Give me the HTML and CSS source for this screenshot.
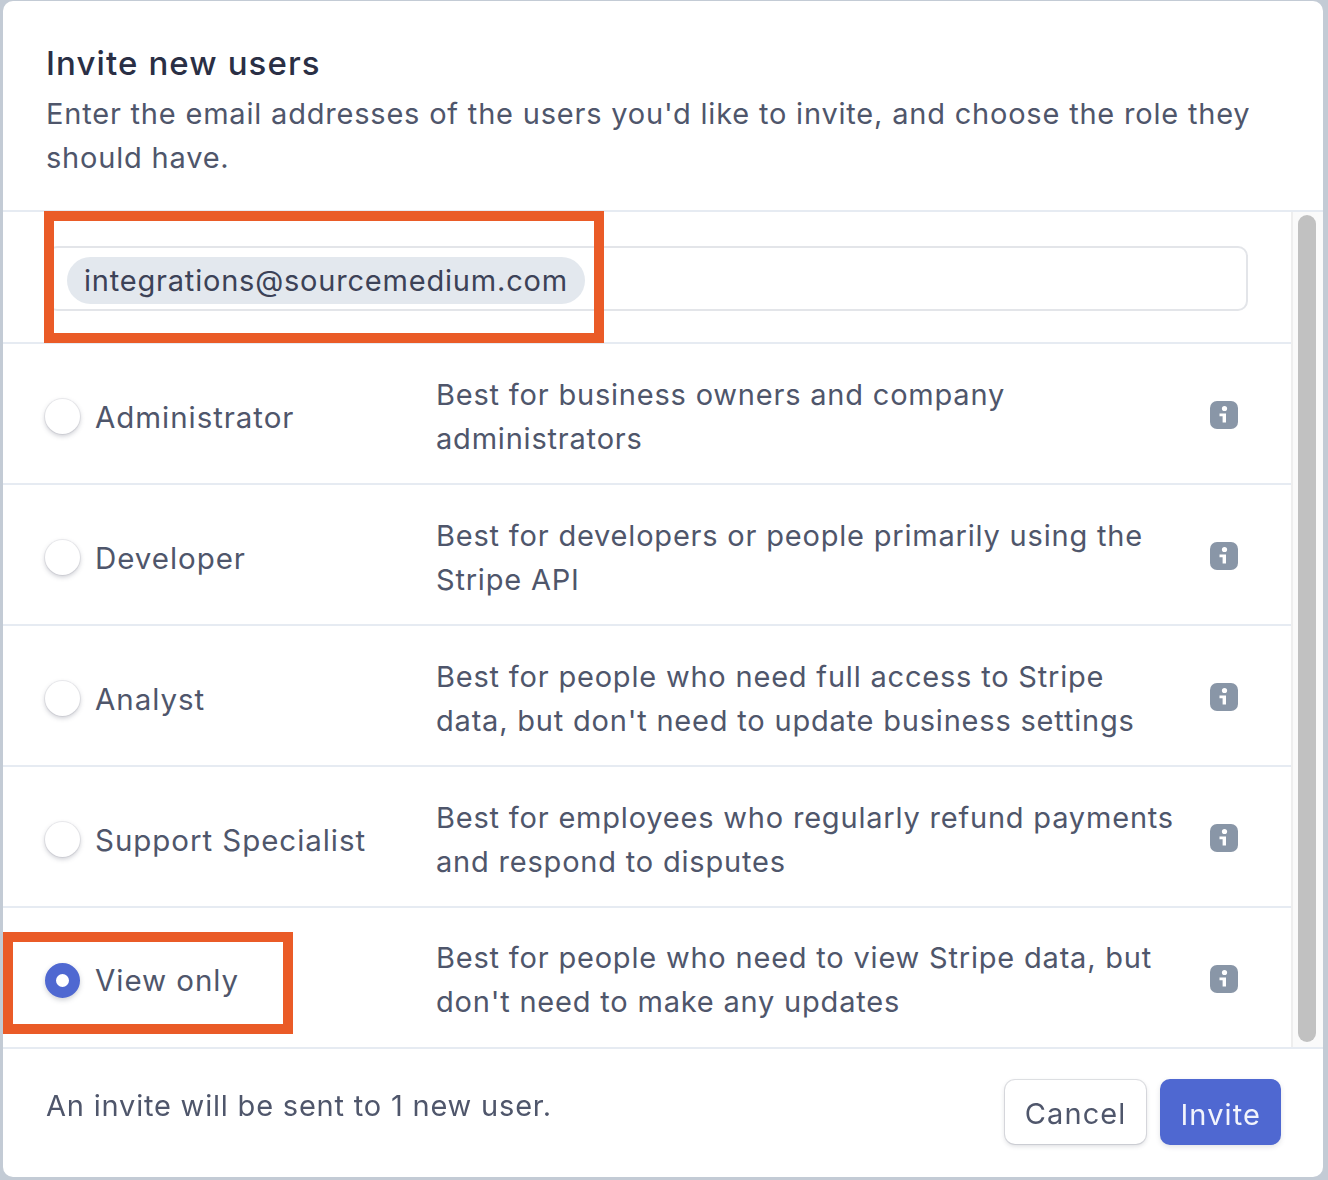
FILE: index.html
```html
<!DOCTYPE html>
<html lang="en">
<head>
<meta charset="utf-8">
<title>Invite new users</title>
<link rel="stylesheet" href="styles.css">
</head>
<body>
<div class="modal">
  <header class="head">
    <h1 class="title">Invite new users</h1>
    <p class="lead">Enter the email addresses of the users you'd like to invite, and choose the role they should have.</p>
  </header>
  <div class="middle">
    <div class="scroll">
      <div class="email-row">
        <div class="email-input"><span class="chip">integrations@sourcemedium.com</span></div>
      </div>
      <div class="role">
        <span class="radio"></span><span class="role-name">Administrator</span>
        <span class="role-desc">Best for business owners and company administrators</span>
        <svg class="info" viewBox="0 0 28 28"><rect width="28" height="28" rx="7" fill="#8996a7"/><circle cx="14.5" cy="7.5" r="2.6" fill="#fff"/><path d="M9.5 12.5h6.5v9h-3.4v-6.2H9.5z" fill="#fff"/></svg>
      </div>
      <div class="role">
        <span class="radio"></span><span class="role-name">Developer</span>
        <span class="role-desc">Best for developers or people primarily using the Stripe API</span>
        <svg class="info" viewBox="0 0 28 28"><rect width="28" height="28" rx="7" fill="#8996a7"/><circle cx="14.5" cy="7.5" r="2.6" fill="#fff"/><path d="M9.5 12.5h6.5v9h-3.4v-6.2H9.5z" fill="#fff"/></svg>
      </div>
      <div class="role">
        <span class="radio"></span><span class="role-name">Analyst</span>
        <span class="role-desc">Best for people who need full access to Stripe data, but don't need to update business settings</span>
        <svg class="info" viewBox="0 0 28 28"><rect width="28" height="28" rx="7" fill="#8996a7"/><circle cx="14.5" cy="7.5" r="2.6" fill="#fff"/><path d="M9.5 12.5h6.5v9h-3.4v-6.2H9.5z" fill="#fff"/></svg>
      </div>
      <div class="role">
        <span class="radio"></span><span class="role-name">Support Specialist</span>
        <span class="role-desc">Best for employees who regularly refund payments and respond to disputes</span>
        <svg class="info" viewBox="0 0 28 28"><rect width="28" height="28" rx="7" fill="#8996a7"/><circle cx="14.5" cy="7.5" r="2.6" fill="#fff"/><path d="M9.5 12.5h6.5v9h-3.4v-6.2H9.5z" fill="#fff"/></svg>
      </div>
      <div class="role role-last">
        <span class="radio radio-on"></span><span class="role-name">View only</span>
        <span class="role-desc">Best for people who need to view Stripe data, but don't need to make any updates</span>
        <svg class="info" viewBox="0 0 28 28"><rect width="28" height="28" rx="7" fill="#8996a7"/><circle cx="14.5" cy="7.5" r="2.6" fill="#fff"/><path d="M9.5 12.5h6.5v9h-3.4v-6.2H9.5z" fill="#fff"/></svg>
      </div>
    </div>
    <div class="track"><div class="thumb"></div></div>
  </div>
  <footer class="foot">
    <span class="note">An invite will be sent to 1 new user.</span>
    <div class="actions">
      <button class="btn btn-cancel">Cancel</button>
      <button class="btn btn-invite">Invite</button>
    </div>
  </footer>
</div>
<div class="mark mark-email"></div>
<div class="mark mark-role"></div>
</body>
</html>
```

FILE: styles.css
```css
* { box-sizing: border-box; }
html, body { margin: 0; height: 100%; }
body {
  position: relative;
  width: 1328px;
  height: 1180px;
  overflow: hidden;
  background: #c3cbd5;
  padding: 1px 5px 3px 3px;
  font-family: Inter, "Liberation Sans", sans-serif;
  color: #4f566b;
  font-size: 29px;
  line-height: 44px;
  letter-spacing: .8px;
  filter: blur(.7px);
}
.modal {
  height: 1176px;
  background: #fff;
  border-radius: 10px;
  display: flex;
  flex-direction: column;
}
.head {
  height: 211px;
  padding: 40px 44px 0 43px;
  border-bottom: 2px solid #e6ebf2;
}
.title {
  margin: 0;
  font-size: 33px;
  line-height: 44px;
  font-weight: 500;
  letter-spacing: 1.1px;
  color: #2a2f45;
}
.lead { margin: 7px 0 0; }
.middle { flex: 1; display: flex; min-height: 0; }
.scroll { flex: 1; min-width: 0; }
.track {
  width: 32px;
  background: #fafafa;
  border-left: 2px solid #eeeeee;
  padding: 3px 7px 5px 5px;
}
.thumb { width: 18px; height: 100%; border-radius: 9px; background: #c1c1c1; }
.email-row {
  height: 132px;
  padding: 34px 43px 0 44px;
  border-bottom: 2px solid #e6ebf2;
}
.email-input {
  height: 65px;
  border: 2px solid #e3e5e9;
  border-radius: 10px;
  padding: 9px 0 0 18px;
}
.chip {
  display: inline-block;
  height: 47px;
  line-height: 48px;
  padding: 0 17px;
  border-radius: 24px;
  background: #e3e8ee;
  color: #3c4257;
}
.role {
  height: 141px;
  display: flex;
  align-items: center;
  padding: 6px 53px 0 42px;
  border-bottom: 2px solid #e6ebf2;
}
.role-last { border-bottom: 0; height: 139px; padding-top: 5px; }
.radio {
  flex: none;
  width: 35px;
  height: 35px;
  border-radius: 50%;
  background: #fff;
  box-shadow: 0 2px 5px rgba(60, 66, 87, .28), 0 0 0 1px rgba(60, 66, 87, .08);
  margin-right: 15px;
}
.radio-on { background: #fff; border: 11px solid #4f68d1; box-shadow: 0 2px 5px rgba(60, 66, 87, .25); }
.role-name { flex: none; width: 341px; color: #4f566b; font-size: 29.5px; letter-spacing: .95px; }
.role-desc { flex: none; width: 742px; }
.info { flex: none; width: 28px; height: 28px; margin-left: auto; margin-bottom: 3px; }
.foot {
  height: 130px;
  border-top: 2px solid #e6ebf2;
  padding: 0 42px 0 43px;
  display: flex;
  align-items: flex-start;
  justify-content: space-between;
}
.note { margin-top: 35px; }
.actions { display: flex; gap: 14px; margin-top: 30px; }
.btn {
  height: 66px;
  border-radius: 10px;
  font: inherit;
  letter-spacing: 1.1px;
  padding: 5px 20px 0;
  border: 0;
}
.btn-cancel {
  height: 64px;
  margin-top: 1px;
  padding-top: 3px;
  background: #fff;
  color: #4f566b;
  box-shadow: 0 2px 5px rgba(60, 66, 87, .2), 0 0 0 1px rgba(60, 66, 87, .14);
}
.btn-invite {
  background: #4f68d1;
  color: #f2f4fc;
  box-shadow: 0 2px 5px rgba(60, 66, 87, .15);
}
.mark { position: absolute; border: 10px solid #ea5b27; }
.mark-email { left: 44px; top: 211px; width: 560px; height: 132px; }
.mark-role { left: 3px; top: 932px; width: 290px; height: 102px; }
```
